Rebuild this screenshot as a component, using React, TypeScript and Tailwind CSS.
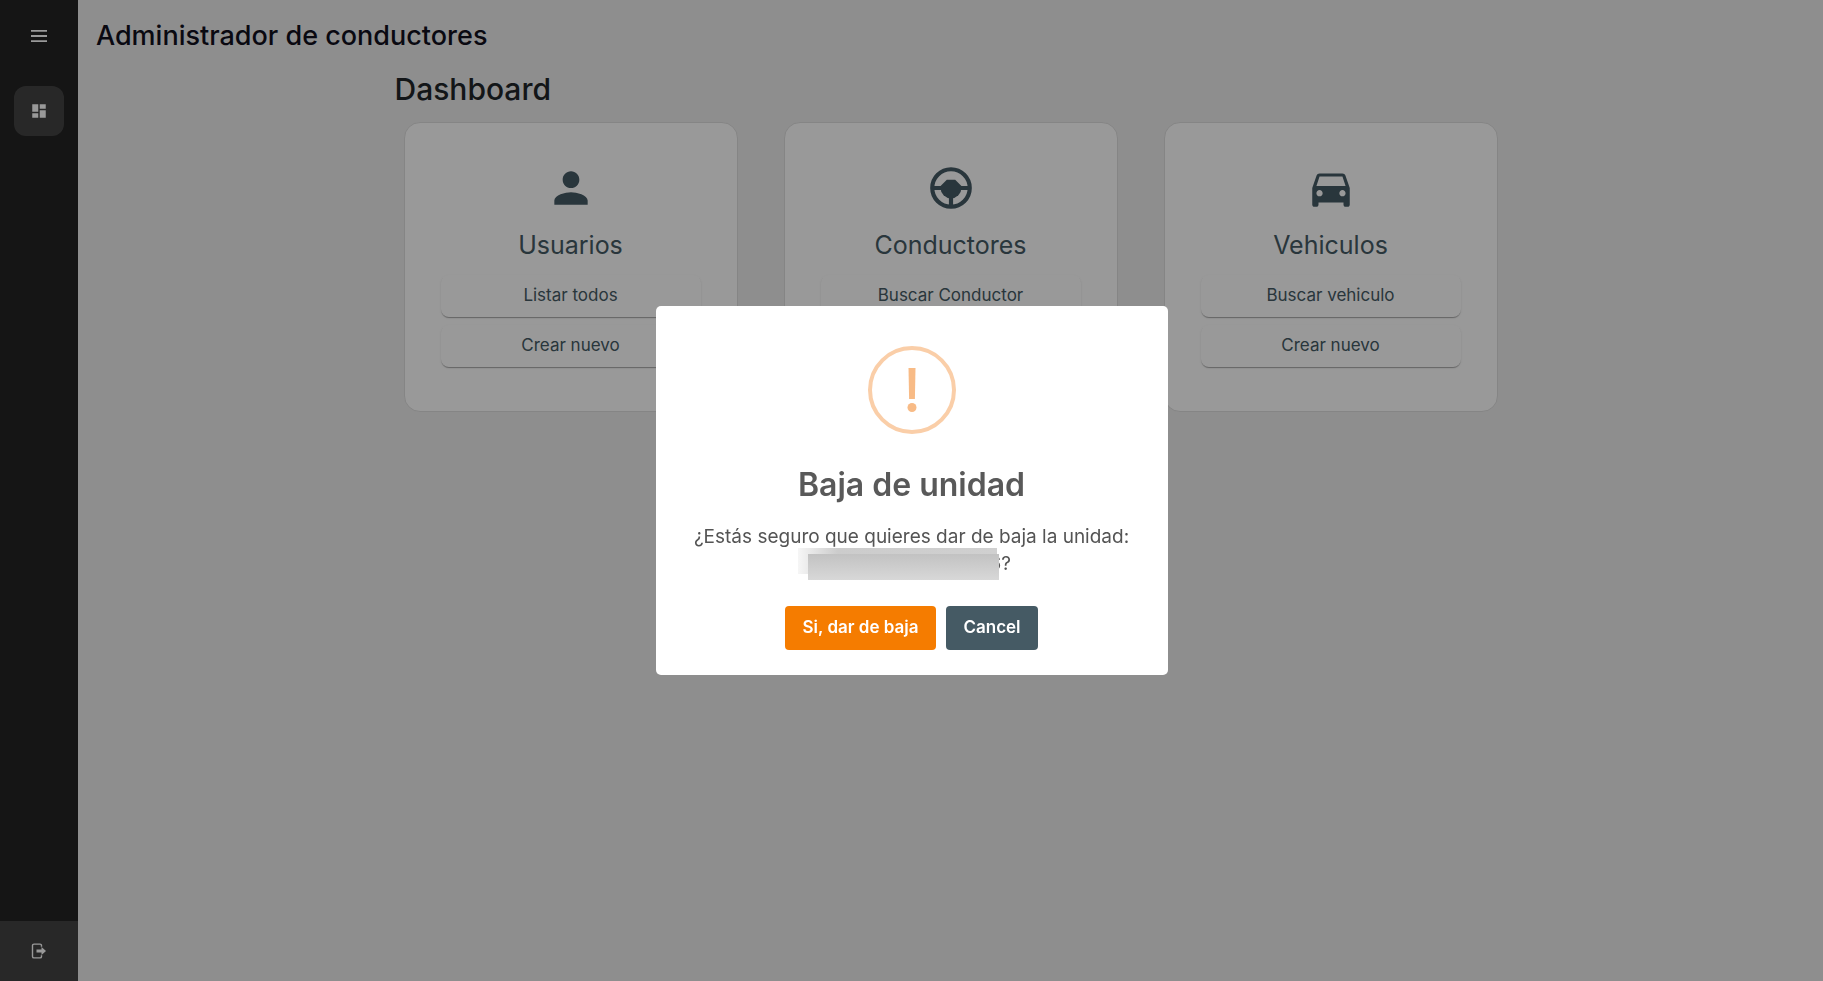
import { MdDashboard, MdDirectionsCar, MdPerson } from "react-icons/md";
import type { ReactNode } from "react";

function MenuIcon() {
  return (
    <svg viewBox="0 0 16 12" className="h-3 w-4" fill="currentColor" aria-hidden="true">
      <path d="M0 0h16v1.800H0zM0 5.100h16v1.800H0zM0 10.200h16V12H0z" />
    </svg>
  );
}

function SteeringIcon() {
  return (
    <svg viewBox="0 0 24 24" className="size-[50px]" fill="none" stroke="currentColor" strokeWidth="2" aria-hidden="true">
      <circle cx="12" cy="12" r="9" />
      <path d="M3 12h6M15 12h6M12 16v5" />
      <path d="M10 8h4l3 3v1a5 5 0 0 1-10 0v-1z" fill="currentColor" stroke="none" />
    </svg>
  );
}

function LogoutIcon() {
  return (
    <svg viewBox="0 0 16 16" className="size-4" aria-hidden="true">
      <path d="M10.500 3.800V2.600A1.500 1.500 0 0 0 9 1.100H3A1.500 1.500 0 0 0 1.500 2.600v10.800A1.500 1.500 0 0 0 3 14.900h6a1.500 1.500 0 0 0 1.500-1.500v-1.200" fill="none" stroke="currentColor" strokeWidth="1.400" />
      <path d="M5.500 6.500h5V4l4.500 4-4.500 4V9.500h-5z" fill="currentColor" />
    </svg>
  );
}

function Card({ icon, title, actions }: { icon: ReactNode; title: string; actions: string[] }) {
  return (
    <section className="mx-[23px] flex h-[290px] flex-col items-center rounded-2xl border border-[#dedede] bg-white px-9 pt-10 text-[#455a64]">
      {icon}
      <h3 className="mt-[14px] mb-3 text-[25px] leading-9">{title}</h3>
      <div className="flex w-full flex-col gap-2">
        {actions.map((a) => (
          <button
            key={a}
            type="button"
            className="h-[42px] w-full rounded-lg text-[17px] shadow-[0_2px_1px_-1px_rgba(0,0,0,0.2),0_1px_1px_rgba(0,0,0,0.14),0_1px_3px_rgba(0,0,0,0.06)]"
          >
            {a}
          </button>
        ))}
      </div>
    </section>
  );
}

export default function App() {
  return (
    <div className="flex min-h-screen bg-[#ededed] font-['Inter','Noto_Sans',sans-serif]">
      <nav className="flex w-[78px] shrink-0 flex-col items-center bg-[#232323] text-white">
        <button type="button" aria-label="Menu" className="mt-6 flex size-6 items-center justify-center">
          <MenuIcon />
        </button>
        <a href="#dashboard" aria-label="Dashboard" className="mt-[38px] flex size-[50px] items-center justify-center rounded-xl bg-[#444444]">
          <MdDashboard size={18} />
        </a>
        <button type="button" aria-label="Salir" className="mt-auto flex h-[60px] w-full items-center justify-center bg-[#444444]">
          <LogoutIcon />
        </button>
      </nav>

      <main className="flex-1">
        <h1 className="px-[18px] pt-[18px] text-[27px] leading-9 font-medium text-[#11101d]">Administrador de conductores</h1>
        <div className="mx-auto max-w-[1140px] pt-4">
          <h2 className="px-[14px] text-[30px] leading-[38px] font-medium text-[#212529]">Dashboard</h2>
          <div className="mt-[14px] grid grid-cols-3">
            <Card icon={<MdPerson size={50} />} title="Usuarios" actions={["Listar todos", "Crear nuevo"]} />
            <Card icon={<SteeringIcon />} title="Conductores" actions={["Buscar Conductor", "Crear nuevo"]} />
            <Card icon={<MdDirectionsCar size={50} />} title="Vehiculos" actions={["Buscar vehiculo", "Crear nuevo"]} />
          </div>
        </div>
      </main>

      <div className="fixed inset-0 flex items-center justify-center bg-black/40">
        <div role="dialog" aria-modal="true" aria-labelledby="dialog-title" className="flex w-[512px] flex-col items-center rounded-[5px] bg-white pt-10 pb-[25px] text-[#545454]">
          <div className="flex size-[88px] items-center justify-center rounded-full border-4 border-[#facea8]">
            <svg viewBox="0 0 10 44" className="h-11 w-[10px]" fill="#f8bb86" aria-hidden="true">
              <path d="M1.500 0h7l-.6 31H2.100z" />
              <circle cx="5" cy="39.500" r="4.500" />
            </svg>
          </div>
          <h2 id="dialog-title" className="mt-[31px] text-[32px] leading-10 font-semibold text-[#595959]">Baja de unidad</h2>
          <p className="mt-[18px] w-full text-center text-[19px] leading-[27px]">
            ¿Estás seguro que quieres dar de baja la unidad:
            <span className="mx-auto flex w-[199px] justify-end">
              <span className="relative">
                6?
                <span className="absolute -top-[2px] right-[14px] h-[26px] w-[199px] bg-linear-to-r from-[#f6f6f6] via-[#cccccc] via-20% to-[#d0d0d0]" />
                <span className="absolute top-1 right-3 h-[26px] w-[191px] bg-linear-to-b from-[#c2c2c2] to-[#d8d8d8]" />
              </span>
            </span>
          </p>
          <div className="mt-[29px] flex gap-[10px] text-[17px] font-semibold text-white">
            <button type="button" className="h-11 w-[151px] rounded bg-[#f57c00]">Si, dar de baja</button>
            <button type="button" className="h-11 w-[92px] rounded bg-[#455a64]">Cancel</button>
          </div>
        </div>
      </div>
    </div>
  );
}
